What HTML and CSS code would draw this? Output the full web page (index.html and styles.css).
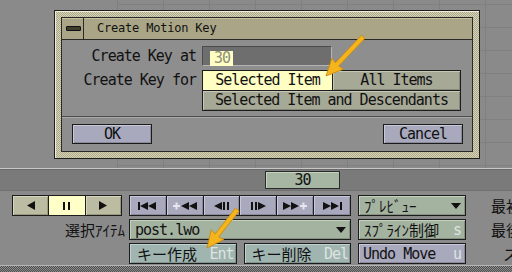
FILE: index.html
```html
<!DOCTYPE html>
<html lang="ja">
<head>
<meta charset="UTF-8">
<title>Create Motion Key</title>
<link rel="stylesheet" href="styles.css">
</head>
<body>

<div class="desktop">
  <div class="window">
    <div class="window-inner">
      <div class="titlebar">
        <div class="menu-box"><span class="menu-icon"></span></div>
        <div class="title">Create Motion Key</div>
      </div>
      <div class="dialog-body">
        <div class="form">
          <div class="form-label">Create Key at</div>
          <div class="field"><span class="field-sel">30</span></div>
          <div class="form-label">Create Key for</div>
          <div class="choice">
            <div class="choice-btn on">Selected Item</div>
            <div class="choice-btn">All Items</div>
            <div class="choice-btn wide">Selected Item and Descendants</div>
          </div>
        </div>
        <div class="separator"></div>
        <div class="dialog-actions">
          <div class="btn">OK</div>
          <div class="btn">Cancel</div>
        </div>
      </div>
    </div>
  </div>
</div>

<div class="panel">
  <div class="timebar">
    <div class="frame-knob">30</div>
  </div>

  <div class="controls">
    <!-- row 1 -->
    <div class="btn-group play">
      <div class="pbtn"><svg width="8" height="9" viewBox="0 0 8 9"><polygon points="0,4.5 8,0 8,9"/></svg></div>
      <div class="pbtn on"><svg width="7" height="8" viewBox="0 0 7 8"><rect x="0" y="0" width="2" height="8"/><rect x="5" y="0" width="2" height="8"/></svg></div>
      <div class="pbtn"><svg width="8" height="9" viewBox="0 0 8 9"><polygon points="0,0 8,4.5 0,9"/></svg></div>
    </div>
    <div class="btn-group transport">
      <div class="tbtn"><svg width="19" height="8" viewBox="0 0 19 8"><rect x="0" y="0" width="2" height="8"/><polygon points="2,4 10,0 10,8"/><polygon points="10,4 18,0 18,8"/></svg></div>
      <div class="tbtn"><svg width="24" height="8" viewBox="0 0 24 8"><rect x="0" y="3" width="7" height="2" fill="#e6e6ee"/><rect x="2.5" y="0.5" width="2" height="7" fill="#e6e6ee"/><polygon points="8,4 16,0 16,8"/><polygon points="16,4 24,0 24,8"/></svg></div>
      <div class="tbtn"><svg width="15" height="8" viewBox="0 0 15 8"><polygon points="0,4 8,0 8,8"/><rect x="9" y="0" width="2" height="8"/><rect x="13" y="0" width="2" height="8"/></svg></div>
      <div class="tbtn"><svg width="15" height="8" viewBox="0 0 15 8"><rect x="0" y="0" width="2" height="8"/><rect x="4" y="0" width="2" height="8"/><polygon points="7,0 15,4 7,8"/></svg></div>
      <div class="tbtn"><svg width="24" height="8" viewBox="0 0 24 8"><polygon points="0,0 8,4 0,8"/><polygon points="8,0 16,4 8,8"/><rect x="17" y="3" width="7" height="2" fill="#e6e6ee"/><rect x="19.5" y="0.5" width="2" height="7" fill="#e6e6ee"/></svg></div>
      <div class="tbtn"><svg width="19" height="8" viewBox="0 0 19 8"><polygon points="0,0 8,4 0,8"/><polygon points="8,0 16,4 8,8"/><rect x="17" y="0" width="2" height="8"/></svg></div>
    </div>
    <div class="ctl drop">
      <span class="jp">ﾌﾟﾚﾋﾞｭｰ</span>
      <svg class="caret" width="10" height="6" viewBox="0 0 10 6"><polygon points="0,0 10,0 5,6"/></svg>
    </div>
    <div class="side-label jp">最初のフレーム</div>

    <!-- row 2 -->
    <div class="row-label jp">選択ｱｲﾃﾑ</div>
    <div class="ctl drop">
      <span>post.lwo</span>
      <svg class="caret" width="10" height="6" viewBox="0 0 10 6"><polygon points="0,0 10,0 5,6"/></svg>
    </div>
    <div class="ctl drop">
      <span class="jp">ｽﾌﾟﾗｲﾝ制御</span>
      <span class="hotkey">s</span>
    </div>
    <div class="side-label jp">最後のフレーム</div>

    <!-- row 3 -->
    <div></div>
    <div class="key-pair">
      <div class="ctl key"><span class="jp">キー作成</span><span class="hotkey">Ent</span></div>
      <div class="ctl key"><span class="jp">キー削除</span><span class="hotkey">Del</span></div>
    </div>
    <div class="ctl plain"><span>Undo Move</span><span class="hotkey">u</span></div>
    <div class="side-label short jp">ステップ</div>
  </div>

  <div class="panel-foot"></div>
</div>

<svg class="arrows" width="512" height="272" viewBox="0 0 512 272">
  <g transform="translate(326 76) rotate(-46.5)">
    <polygon class="arrow" points="0,0 17,-8 16,-2.3 54,-2.3 54,2.3 16,2.3 17,8"/>
  </g>
  <g transform="translate(207 248) rotate(-51.7)">
    <polygon class="arrow" points="0,0 17,-8 16,-2.3 49,-2.3 49,2.3 16,2.3 17,8"/>
  </g>
</svg>

</body>
</html>
```

FILE: styles.css
```css
body {
    margin: 0;
    width: 512px;
    height: 272px;
    overflow: hidden;
    position: relative;
    background-color: #8a8a8a;
    font-family: "DejaVu Sans Mono", "Noto Sans CJK JP", monospace;
    font-size: 15px;
    letter-spacing: -1px;
    color: #111;
}

.jp {
    font-family: "Noto Sans CJK JP", sans-serif;
    letter-spacing: 0;
}

/* desktop with the viewport grid */
.desktop {
    position: relative;
    height: 168px;
    padding: 10px 0 0 54px;
    box-sizing: border-box;
}
.desktop::before {
    content: "";
    position: absolute;
    left: 117px;
    top: 0;
    right: 0;
    bottom: 0;
    background-image:
        linear-gradient(to right, #808080 1px, transparent 1px),
        linear-gradient(to bottom, #808080 1px, transparent 1px);
    background-size: 46px 23px;
    background-position: 0 4px;
}

/* dialog window */
.window {
    position: relative;
    width: 426px;
    height: 149px;
    box-sizing: border-box;
    border: 1px solid #1e1e1e;
    padding: 6px;
    background: repeating-conic-gradient(#d8d4b6 0 25%, #aca88c 0 50%) 0 0 / 2px 2px;
    box-shadow: inset 1px 1px 0 #f0ecd8;
}
.window-inner {
    height: 100%;
    box-sizing: border-box;
    border: 1px solid #2a2a2a;
    background-color: #8e8e8e;
    display: flex;
    flex-direction: column;
}
.titlebar {
    display: flex;
    height: 21px;
    flex: none;
    border-bottom: 1px solid #2a2a2a;
    background-color: #aaa586;
    box-shadow: inset 0 1px 0 #c4c0a2;
}
.menu-box {
    width: 21px;
    border-right: 1px solid #2a2a2a;
    display: flex;
    align-items: center;
    justify-content: center;
}
.menu-icon {
    width: 13px;
    height: 3px;
    border: 1px solid #111;
    border-radius: 1px;
    background-color: #403d2c;
    margin-left: 2px;
}
.title {
    padding-left: 13px;
    font-size: 12px;
    letter-spacing: -0.2px;
    line-height: 21px;
}

.dialog-body {
    flex: 1;
    display: flex;
    flex-direction: column;
}
.form {
    display: grid;
    grid-template-columns: 134px 259px;
    column-gap: 6px;
    row-gap: 4px;
    padding-top: 6px;
    align-items: start;
}
.form-label {
    text-align: right;
    height: 20px;
    line-height: 20px;
}
.field {
    width: 130px;
    height: 20px;
    box-sizing: border-box;
    background-color: #6e6e6e;
    border-top: 1px solid #4c4c4c;
    border-left: 1px solid #4c4c4c;
    border-bottom: 1px solid #b4b4b4;
    border-right: 1px solid #b4b4b4;
    padding: 2px 0 0 7px;
}
.field-sel {
    display: inline-block;
    height: 15px;
    line-height: 15px;
    padding: 0 3px 0 4px;
    background-color: #ffffc4;
    color: #8e8e7a;
}
.choice {
    display: grid;
    grid-template-columns: 129px 127px;
    grid-template-rows: 19px 19px;
    gap: 1px;
    padding: 1px;
    background-color: #1c1c1c;
}
.choice-btn {
    background-color: #a7a997;
    box-shadow: inset 1px 1px 0 #c6c8b6, inset -1px -1px 0 #86887a;
    text-align: center;
    line-height: 19px;
}
.choice-btn.on {
    background-color: #ffffc4;
    box-shadow: none;
}
.choice-btn.wide {
    grid-column: 1 / 3;
}

.separator {
    margin-top: 5px;
    border-top: 1px solid #4e4e4e;
    border-bottom: 1px solid #a8a8a8;
}
.dialog-actions {
    display: flex;
    justify-content: space-between;
    padding: 6px 9px 0 10px;
}
.btn {
    width: 80px;
    height: 20px;
    box-sizing: border-box;
    border: 1px solid #1c1c1c;
    background-color: #a9a9bd;
    box-shadow: inset 1px 1px 0 #c8c8da, inset -1px -1px 0 #8a8a9c;
    text-align: center;
    line-height: 18px;
}

/* lower control panel */
.panel {
    background-color: #8a8a8a;
}
.timebar {
    height: 19px;
    border-top: 1px solid #c8c8c8;
    border-bottom: 1px solid #707070;
    box-shadow: inset 0 1px 0 #6a6a6a;
    background-color: #7a7a7a;
    padding: 2px 0 0 265px;
}
.frame-knob {
    width: 75px;
    height: 18px;
    box-sizing: border-box;
    border: 1px solid #2a2a2a;
    background-color: #a6b6a2;
    box-shadow: inset 1px 1px 0 #c4d2c0;
    text-align: center;
    line-height: 16px;
}

.controls {
    display: grid;
    grid-template-columns: 110px 222px 108px 1fr;
    grid-template-rows: 21px 21px 21px;
    column-gap: 7px;
    row-gap: 3px;
    padding: 4px 0 1px 12px;
}
.btn-group {
    display: grid;
    gap: 1px;
    padding: 1px;
    background-color: #1c1c1c;
}
.btn-group.play {
    grid-template-columns: repeat(3, 1fr);
}
.btn-group.transport {
    grid-template-columns: repeat(6, 1fr);
}
.pbtn,
.tbtn {
    display: flex;
    align-items: center;
    justify-content: center;
    background-color: #bcbca2;
    box-shadow: inset 1px 1px 0 #d6d6c0, inset -1px -1px 0 #98987e;
}
.pbtn.on {
    background-color: #ffffc8;
    box-shadow: none;
}
.tbtn {
    background-color: #a9a9bd;
    box-shadow: inset 1px 1px 0 #c8c8da, inset -1px -1px 0 #8a8a9c;
}
.pbtn svg,
.tbtn svg,
.caret {
    fill: #111;
}

.ctl {
    display: flex;
    align-items: center;
    box-sizing: border-box;
    border: 1px solid #1c1c1c;
    padding: 0 4px 0 4px;
    white-space: nowrap;
    background-color: #a4b2a0;
    box-shadow: inset 1px 1px 0 #c2d0be, inset -1px -1px 0 #84927f;
}
.ctl.drop {
    padding-left: 5px;
}
.ctl .caret {
    margin-left: auto;
}
.ctl.key {
    background-color: #a0b4b0;
    box-shadow: inset 1px 1px 0 #c0d2ce, inset -1px -1px 0 #809490;
    padding: 0 2px 0 7px;
}
.ctl.plain {
    background-color: #a9a9bd;
    box-shadow: inset 1px 1px 0 #c8c8da, inset -1px -1px 0 #8a8a9c;
}
.hotkey {
    margin-left: auto;
    color: #dde4e0;
}
.key-pair {
    display: flex;
    gap: 7px;
}
.key-pair .ctl {
    flex: 1;
}

.row-label {
    text-align: right;
    margin-right: -3px;
    line-height: 21px;
    font-size: 15px;
}
.side-label {
    padding-left: 18px;
    white-space: nowrap;
    overflow: hidden;
    line-height: 21px;
}
.side-label.short {
    padding-left: 30px;
}

.panel-foot {
    height: 6px;
    border-top: 1px solid #b6b6b6;
    background: repeating-conic-gradient(#4e4e4e 0 25%, #8c8c8c 0 50%) 0 0 / 2px 2px;
}

/* pointer arrows laid over the screenshot */
.arrows {
    position: absolute;
    left: 0;
    top: 0;
    pointer-events: none;
}
.arrow {
    fill: #f6b41c;
    stroke: #c88a0e;
    stroke-width: 0.8;
    stroke-linejoin: round;
}
```
